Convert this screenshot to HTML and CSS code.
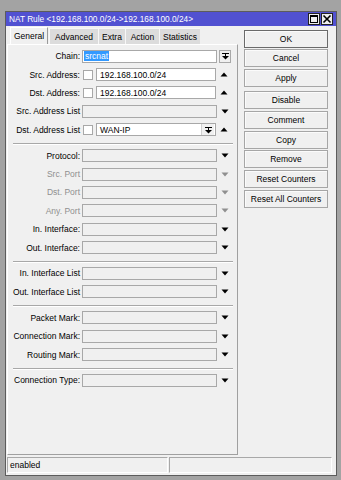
FILE: index.html
```html
<!DOCTYPE html>
<html>
<head>
<meta charset="utf-8">
<link rel="stylesheet" href="styles.css">
</head>
<body>
<div class="window">
  <div class="titlebar">
    <span class="title">NAT Rule &lt;192.168.100.0/24-&gt;192.168.100.0/24&gt;</span>
    <div class="tbtns">
      <span class="tbtn"><svg width="10" height="10" viewBox="0 0 10 10"><rect x="1.5" y="1.5" width="7" height="7" fill="none" stroke="#000" stroke-width="1"/><rect x="1" y="1" width="8" height="2" fill="#000"/></svg></span>
      <span class="tbtn"><svg width="10" height="10" viewBox="0 0 10 10"><path d="M1.5 1.5 L8.5 8.5 M8.5 1.5 L1.5 8.5" stroke="#000" stroke-width="1.6"/></svg></span>
    </div>
  </div>
  <div class="main">
    <div class="leftcol">
      <div class="tabs">
        <span class="tab active t-general">General</span>
        <span class="tab t-adv">Advanced</span>
        <span class="tab t-extra">Extra</span>
        <span class="tab t-action">Action</span>
        <span class="tab t-stats">Statistics</span>
      </div>
      <div class="panel">
        <div class="group">
          <div class="row">
            <span class="label">Chain:</span>
            <span class="field wide filled"><span class="sel">srcnat</span></span>
            <span class="ddbtn"><svg width="9" height="8" viewBox="0 0 9 8"><rect x="1" y="1" width="7" height="1" fill="#000"/><rect x="4" y="1" width="1" height="3" fill="#000"/><path d="M1 4 L8 4 L4.5 7.5 Z" fill="#000"/></svg></span>
          </div>
          <div class="row">
            <span class="label">Src. Address:</span>
            <span class="chk"></span>
            <span class="field narrow filled">192.168.100.0/24</span>
            <span class="arrow"><svg width="8" height="5" viewBox="0 0 8 5"><path d="M0.5 4.5 L7.5 4.5 L4 0.5 Z" fill="#000"/></svg></span>
          </div>
          <div class="row">
            <span class="label">Dst. Address:</span>
            <span class="chk"></span>
            <span class="field narrow filled">192.168.100.0/24</span>
            <span class="arrow"><svg width="8" height="5" viewBox="0 0 8 5"><path d="M0.5 4.5 L7.5 4.5 L4 0.5 Z" fill="#000"/></svg></span>
          </div>
          <div class="row">
            <span class="label">Src. Address List</span>
            <span class="field wide"></span>
            <span class="arrow"><svg width="8" height="5" viewBox="0 0 8 5"><path d="M0.5 0.5 L7.5 0.5 L4 4.5 Z" fill="#000"/></svg></span>
          </div>
          <div class="row">
            <span class="label">Dst. Address List</span>
            <span class="chk"></span>
            <span class="field narrow filled combo"><span class="ctext">WAN-IP</span><span class="inbtn"><svg width="9" height="8" viewBox="0 0 9 8"><rect x="1" y="1" width="7" height="1" fill="#000"/><rect x="4" y="1" width="1" height="3" fill="#000"/><path d="M1 4 L8 4 L4.5 7.5 Z" fill="#000"/></svg></span></span>
            <span class="arrow"><svg width="8" height="5" viewBox="0 0 8 5"><path d="M0.5 4.5 L7.5 4.5 L4 0.5 Z" fill="#000"/></svg></span>
          </div>
        </div>
        <div class="sep"></div>
        <div class="group">
          <div class="row">
            <span class="label">Protocol:</span>
            <span class="field wide"></span>
            <span class="arrow"><svg width="8" height="5" viewBox="0 0 8 5"><path d="M0.5 0.5 L7.5 0.5 L4 4.5 Z" fill="#000"/></svg></span>
          </div>
          <div class="row dis">
            <span class="label">Src. Port</span>
            <span class="field wide"></span>
            <span class="arrow"><svg width="8" height="5" viewBox="0 0 8 5"><path d="M0.5 0.5 L7.5 0.5 L4 4.5 Z" fill="#8f8f8f"/></svg></span>
          </div>
          <div class="row dis">
            <span class="label">Dst. Port</span>
            <span class="field wide"></span>
            <span class="arrow"><svg width="8" height="5" viewBox="0 0 8 5"><path d="M0.5 0.5 L7.5 0.5 L4 4.5 Z" fill="#8f8f8f"/></svg></span>
          </div>
          <div class="row dis">
            <span class="label">Any. Port</span>
            <span class="field wide"></span>
            <span class="arrow"><svg width="8" height="5" viewBox="0 0 8 5"><path d="M0.5 0.5 L7.5 0.5 L4 4.5 Z" fill="#8f8f8f"/></svg></span>
          </div>
          <div class="row">
            <span class="label">In. Interface:</span>
            <span class="field wide"></span>
            <span class="arrow"><svg width="8" height="5" viewBox="0 0 8 5"><path d="M0.5 0.5 L7.5 0.5 L4 4.5 Z" fill="#000"/></svg></span>
          </div>
          <div class="row">
            <span class="label">Out. Interface:</span>
            <span class="field wide"></span>
            <span class="arrow"><svg width="8" height="5" viewBox="0 0 8 5"><path d="M0.5 0.5 L7.5 0.5 L4 4.5 Z" fill="#000"/></svg></span>
          </div>
        </div>
        <div class="sep"></div>
        <div class="group">
          <div class="row">
            <span class="label">In. Interface List</span>
            <span class="field wide"></span>
            <span class="arrow"><svg width="8" height="5" viewBox="0 0 8 5"><path d="M0.5 0.5 L7.5 0.5 L4 4.5 Z" fill="#000"/></svg></span>
          </div>
          <div class="row">
            <span class="label">Out. Interface List</span>
            <span class="field wide"></span>
            <span class="arrow"><svg width="8" height="5" viewBox="0 0 8 5"><path d="M0.5 0.5 L7.5 0.5 L4 4.5 Z" fill="#000"/></svg></span>
          </div>
        </div>
        <div class="sep"></div>
        <div class="group">
          <div class="row">
            <span class="label">Packet Mark:</span>
            <span class="field wide"></span>
            <span class="arrow"><svg width="8" height="5" viewBox="0 0 8 5"><path d="M0.5 0.5 L7.5 0.5 L4 4.5 Z" fill="#000"/></svg></span>
          </div>
          <div class="row">
            <span class="label">Connection Mark:</span>
            <span class="field wide"></span>
            <span class="arrow"><svg width="8" height="5" viewBox="0 0 8 5"><path d="M0.5 0.5 L7.5 0.5 L4 4.5 Z" fill="#000"/></svg></span>
          </div>
          <div class="row">
            <span class="label">Routing Mark:</span>
            <span class="field wide"></span>
            <span class="arrow"><svg width="8" height="5" viewBox="0 0 8 5"><path d="M0.5 0.5 L7.5 0.5 L4 4.5 Z" fill="#000"/></svg></span>
          </div>
        </div>
        <div class="sep"></div>
        <div class="group">
          <div class="row">
            <span class="label">Connection Type:</span>
            <span class="field wide"></span>
            <span class="arrow"><svg width="8" height="5" viewBox="0 0 8 5"><path d="M0.5 0.5 L7.5 0.5 L4 4.5 Z" fill="#000"/></svg></span>
          </div>
        </div>
      </div>
    </div>
    <div class="buttons">
      <span class="btn default">OK</span>
      <span class="btn">Cancel</span>
      <span class="btn">Apply</span>
      <span class="btn gap">Disable</span>
      <span class="btn">Comment</span>
      <span class="btn">Copy</span>
      <span class="btn">Remove</span>
      <span class="btn">Reset Counters</span>
      <span class="btn">Reset All Counters</span>
    </div>
  </div>
  <div class="status">
    <div class="cell c1">enabled</div>
    <div class="cell c2"></div>
  </div>
</div>
</body>
</html>
```
FILE: styles.css
```css
html, body {
  margin: 0;
  padding: 0;
}
body {
  background: #a3a3a3;
  width: 341px;
  height: 480px;
  overflow: hidden;
  font-family: "Liberation Sans", Arial, sans-serif;
  font-size: 8.5px;
  color: #000;
}
.window {
  box-sizing: border-box;
  margin: 11px 0 0 5px;
  width: 332px;
  height: 465px;
  border: 1px solid #5c5c5c;
  background: #f0f0f0;
  display: flex;
  flex-direction: column;
}
.titlebar {
  height: 14px;
  flex: none;
  background: #5151d1;
  display: flex;
  align-items: center;
  justify-content: space-between;
}
.title {
  color: #fff;
  font-size: 8.3px;
  padding-left: 3px;
  white-space: nowrap;
}
.tbtns {
  display: flex;
  gap: 1px;
  margin-right: 3px;
}
.tbtn {
  box-sizing: border-box;
  width: 12px;
  height: 12px;
  background: #eeeeee;
  border: 1px solid #222;
  display: flex;
  align-items: center;
  justify-content: center;
}
.main {
  flex: 1;
  display: flex;
  padding: 1px 0 0 1px;
  min-height: 0;
}
.leftcol {
  width: 231px;
  display: flex;
  flex-direction: column;
}
.tabs {
  height: 17px;
  flex: none;
  display: flex;
  align-items: flex-end;
  padding-left: 3px;
}
.tab {
  box-sizing: border-box;
  height: 16px;
  display: flex;
  align-items: center;
  justify-content: center;
  background: #dcdcdc;
  border-left: 1px solid #f7f7f7;
  border-top: 1px solid #f7f7f7;
  color: #000;
}
.tab.active {
  height: 17px;
  background: #f0f0f0;
  border-left: 1px solid #ffffff;
  border-top: 1px solid #ffffff;
  border-right: 1px solid #9a9a9a;
}
.t-general { width: 38px; }
.t-adv { width: 49px; margin-left: 1px; }
.t-extra { width: 27px; }
.t-action { width: 34px; }
.t-stats { width: 41px; }
.panel {
  flex: 1;
  box-sizing: border-box;
  border-top: 1px solid #ffffff;
  border-left: 1px solid #ffffff;
  border-right: 1px solid #a0a0a0;
  border-bottom: 1px solid #a0a0a0;
  padding-top: 2px;
}
.group {
  display: flex;
  flex-direction: column;
}
.row {
  height: 18.4px;
  display: flex;
  align-items: center;
}
.label {
  box-sizing: border-box;
  width: 73px;
  text-align: right;
  padding-right: 1px;
  white-space: nowrap;
  flex: none;
}
.row.dis .label { color: #8f8f8f; }
.field {
  box-sizing: border-box;
  height: 13px;
  border: 1px solid #a8a8a8;
  background: #f0f0f0;
  margin-left: 1px;
  display: flex;
  align-items: center;
  padding-left: 3px;
  white-space: nowrap;
  overflow: hidden;
  flex: none;
}
.field.filled { background: #ffffff; }
.field.wide { width: 135px; }
.field.narrow { width: 120px; }
.sel {
  background: #3399ff;
  color: #fff;
  padding: 0 1px;
  margin-left: -2px;
}
.chk {
  box-sizing: border-box;
  width: 10px;
  height: 10px;
  border: 1px solid #a8a8a8;
  background: #fff;
  margin-left: 2px;
  margin-right: 3px;
  flex: none;
}
.chk + .field { margin-left: 0; }
.field.combo { padding-right: 0; justify-content: space-between; }
.ctext { flex: 1; }
.inbtn {
  box-sizing: border-box;
  width: 13px;
  height: 11px;
  border-left: 1px solid #cfcfcf;
  background: #f0f0f0;
  display: flex;
  align-items: center;
  justify-content: center;
  margin-right: 1px;
}
.ddbtn {
  box-sizing: border-box;
  width: 12px;
  height: 13px;
  border: 1px solid #a8a8a8;
  background: #f0f0f0;
  margin-left: 2px;
  display: flex;
  align-items: center;
  justify-content: center;
}
.arrow {
  width: 16px;
  display: flex;
  justify-content: center;
  flex: none;
}
.arrow svg { display: block; }
.sep {
  height: 1px;
  border-top: 1px solid #a8a8a8;
  background: #ffffff;
  margin: 4px 4px 1.5px 5px;
}
.buttons {
  width: 84px;
  margin-left: 6px;
  padding-top: 2.5px;
  display: flex;
  flex-direction: column;
  gap: 1.7px;
}
.btn {
  box-sizing: border-box;
  height: 18px;
  border: 1px solid #a6a6a6;
  background: #f0f0f0;
  box-shadow: inset 1px 1px 0 #fbfbfb;
  display: flex;
  align-items: center;
  justify-content: center;
  white-space: nowrap;
  color: #000;
}
.btn.default { border-color: #6a6a6a; }
.btn.gap { margin-top: 2.6px; }
.status {
  height: 16px;
  flex: none;
  display: flex;
  gap: 1px;
  margin: 2px 0 2px 1px;
}
.cell {
  box-sizing: border-box;
  height: 16px;
  border-top: 1px solid #a8a8a8;
  border-left: 1px solid #a8a8a8;
  border-bottom: 1px solid #ffffff;
  border-right: 1px solid #ffffff;
  display: flex;
  align-items: center;
  padding-left: 2px;
}
.c1 { width: 161px; }
.c2 { width: 163px; }
```
